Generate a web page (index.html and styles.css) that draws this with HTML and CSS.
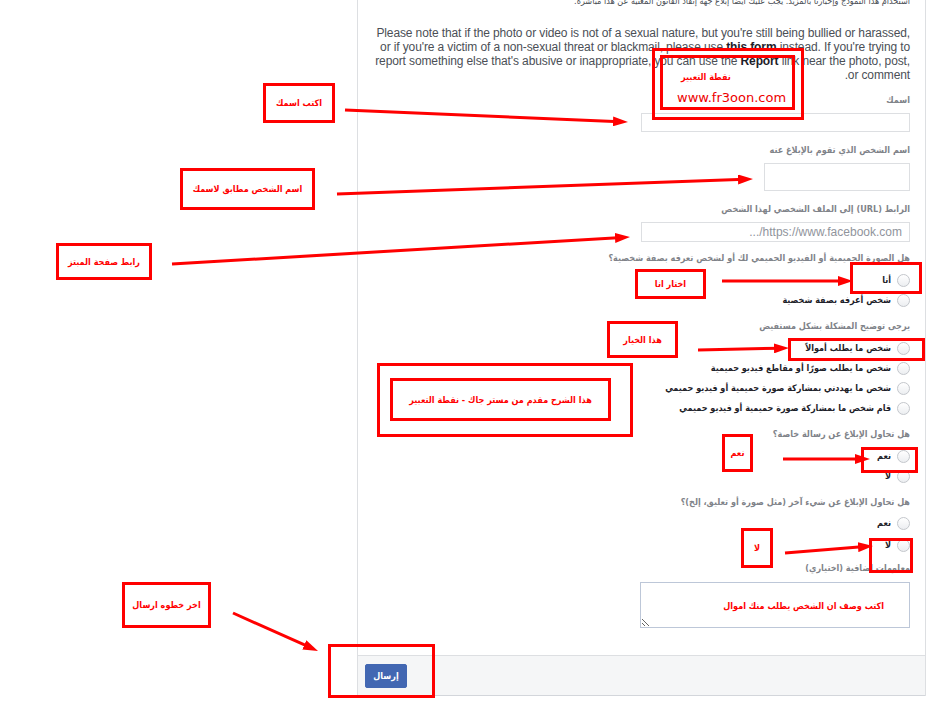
FILE: index.html
```html
<!DOCTYPE html>
<html lang="ar">
<head>
    <meta charset="UTF-8">
    <meta name="viewport" content="width=device-width, initial-scale=1.0">
    <title>الإبلاغ عن صورة حميمية</title>
    <link rel="stylesheet" href="styles.css">
</head>
<body>
    <div class="page">
        <div class="panel">
            <div class="panel-body" dir="rtl">
                <p class="intro-ar">استخدام هذا النموذج وإخبارنا بالمزيد. يجب عليك أيضًا إبلاغ جهة إنفاذ القانون المعنية عن هذا مباشرة.</p>
                <p class="notice">Please note that if the photo or video is not of a sexual nature, but you're still being bullied or harassed, or if you're a victim of a non-sexual threat or blackmail, please use <b>this form</b> instead. If you're trying to report something else that's abusive or inappropriate, you can use the <b>Report</b> link near the photo, post, or comment.</p>

                <div class="field">
                    <label class="field-label" for="yourname">اسمك</label>
                    <input class="text-input" type="text" id="yourname">
                </div>
                <div class="field">
                    <label class="field-label" for="reported">اسم الشخص الذي تقوم بالإبلاغ عنه</label>
                    <input class="text-input short" type="text" id="reported">
                </div>
                <div class="field">
                    <label class="field-label" for="profile">الرابط (URL) إلى الملف الشخصي لهذا الشخص</label>
                    <input class="text-input url" type="text" id="profile" placeholder="https://www.facebook.com/...">
                </div>

                <div class="question">
                    <div class="question-label">هل الصورة الحميمية أو الفيديو الحميمي لك أو لشخص تعرفه بصفة شخصية؟</div>
                    <label class="radio-row"><input type="radio" name="whose">أنا</label>
                    <label class="radio-row"><input type="radio" name="whose">شخص أعرفه بصفة شخصية</label>
                </div>
                <div class="question">
                    <div class="question-label">يرجى توضيح المشكلة بشكل مستفيض</div>
                    <label class="radio-row"><input type="radio" name="problem">شخص ما يطلب أموالاً</label>
                    <label class="radio-row"><input type="radio" name="problem">شخص ما يطلب صورًا أو مقاطع فيديو حميمية</label>
                    <label class="radio-row"><input type="radio" name="problem">شخص ما يهددني بمشاركة صورة حميمية أو فيديو حميمي</label>
                    <label class="radio-row"><input type="radio" name="problem">قام شخص ما بمشاركة صورة حميمية أو فيديو حميمي</label>
                </div>
                <div class="question">
                    <div class="question-label">هل تحاول الإبلاغ عن رسالة خاصة؟</div>
                    <label class="radio-row"><input type="radio" name="message">نعم</label>
                    <label class="radio-row"><input type="radio" name="message">لا</label>
                </div>
                <div class="question loose">
                    <div class="question-label">هل تحاول الإبلاغ عن شيء آخر (مثل صورة أو تعليق، إلخ)؟</div>
                    <label class="radio-row"><input type="radio" name="other">نعم</label>
                    <label class="radio-row"><input type="radio" name="other">لا</label>
                </div>

                <div class="field extra">
                    <label class="field-label" for="details">معلومات إضافية (اختياري)</label>
                    <textarea class="details" id="details"></textarea>
                </div>
            </div>
            <div class="panel-footer">
                <button class="send-btn" type="button">إرسال</button>
            </div>
        </div>

        <!-- red notes drawn over the form -->
        <div class="note-box note-site-outer"></div>
        <div class="note-box note-site">
            <span class="note-text">نقطة التعبير</span>
            <span class="site-url">www.fr3oon.com</span>
        </div>
        <div class="note-box note-name"><span class="note-text">اكتب اسمك</span></div>
        <div class="note-box note-same"><span class="note-text">اسم الشخص مطابق لاسمك</span></div>
        <div class="note-box note-link"><span class="note-text">رابط صفحة المبتز</span></div>
        <div class="note-box note-me"><span class="note-text">اختار انا</span></div>
        <div class="note-box mark-me"></div>
        <div class="note-box note-choice"><span class="note-text">هذا الخيار</span></div>
        <div class="note-box mark-money"></div>
        <div class="note-box note-credit-outer"></div>
        <div class="note-box note-credit"><span class="note-text">هذا الشرح مقدم من مستر جاك - نقطة التعبير</span></div>
        <div class="note-box note-yes"><span class="note-text">نعم</span></div>
        <div class="note-box mark-yes"></div>
        <div class="note-box note-no"><span class="note-text">لا</span></div>
        <div class="note-box mark-no"></div>
        <div class="note-box note-send"><span class="note-text">اخر خطوه ارسال</span></div>
        <div class="note-box mark-send"></div>
        <div class="note-text note-describe">اكتب وصف ان الشخص يطلب منك اموال</div>

        <svg class="arrows" width="943" height="716" viewBox="0 0 943 716">
            <defs>
                <marker id="head" markerWidth="15" markerHeight="10" refX="7" refY="5" orient="auto" markerUnits="userSpaceOnUse">
                    <path d="M0,0 L15,5 L0,10 z" fill="#f00"/>
                </marker>
            </defs>
            <g stroke="#f00" stroke-width="3" marker-end="url(#head)">
                <line x1="345" y1="110" x2="620" y2="121.7"/>
                <line x1="337" y1="194" x2="745" y2="179.3"/>
                <line x1="172" y1="264" x2="622" y2="237.5"/>
                <line x1="722" y1="281" x2="845" y2="281"/>
                <line x1="698" y1="350" x2="781" y2="348.2"/>
                <line x1="783" y1="459" x2="862" y2="459"/>
                <line x1="785" y1="553" x2="865" y2="546.6"/>
                <line x1="233" y1="613" x2="310.7" y2="647.7"/>
            </g>
        </svg>
    </div>
</body>
</html>
```

FILE: styles.css
```css
body {
    margin: 0;
    background-color: #fff;
    font-family: "Liberation Sans", "DejaVu Sans", sans-serif;
}
.page {
    position: relative;
    width: 943px;
    height: 716px;
    overflow: hidden;
}
.panel {
    margin-left: 357px;
    width: 567px;
    border-left: 1px solid #dddfe2;
    border-right: 1px solid #dddfe2;
}
.panel-body {
    padding: 0 15px 27px 19px;
    direction: rtl;
}
.intro-ar {
    margin: -6px 0 0;
    font-family: "DejaVu Sans", sans-serif;
    font-stretch: condensed;
    font-size: 9px;
    line-height: 14px;
    color: #4b4f56;
}
.notice {
    margin: 18px 0 0 -3px;
    font-size: 12px;
    line-height: 14px;
    letter-spacing: -0.12px;
    color: #4b4f56;
}
.notice b {
    color: #1d2129;
}
.field {
    margin-top: 11px;
}
.field-label,
.question-label {
    display: block;
    margin-bottom: 6px;
    font-family: "DejaVu Sans", sans-serif;
    font-stretch: condensed;
    font-size: 9px;
    font-weight: bold;
    line-height: 14px;
    color: #7f8389;
}
.text-input {
    display: block;
    width: 269px;
    height: 19px;
    padding: 0 7px;
    border: 1px solid #dddfe2;
    box-sizing: border-box;
    font-family: "Liberation Sans", sans-serif;
    font-size: 12px;
    background: #fff;
}
.text-input.short {
    width: 146px;
    height: 28px;
}
.text-input.url {
    height: 20px;
}
.text-input::placeholder {
    color: #90949c;
}
.question {
    margin-top: 9px;
}
.question-label {
    margin-bottom: 5px;
}
.question.loose .question-label {
    margin-bottom: 3px;
}
.radio-row {
    display: flex;
    align-items: center;
    gap: 6px;
    height: 20px;
    font-family: "DejaVu Sans", sans-serif;
    font-stretch: condensed;
    font-size: 9px;
    font-weight: bold;
    color: #1d2129;
}
.question.loose .radio-row {
    height: 22px;
}
.radio-row input {
    appearance: none;
    -webkit-appearance: none;
    width: 13px;
    height: 13px;
    margin: 0;
    border: 1px solid #c4c7cc;
    border-radius: 50%;
    background: linear-gradient(#ffffff, #eceef1);
    box-sizing: border-box;
}
.field.extra {
    margin-top: 5px;
}
.field.extra .field-label {
    margin-bottom: 7px;
}
.details {
    display: block;
    width: 270px;
    height: 46px;
    margin: 0;
    border: 1px solid #bdc7d8;
    box-sizing: border-box;
    font-size: 12px;
}
.panel-footer {
    padding: 8px 7px 7px;
    background-color: #f5f6f7;
    border-top: 1px solid #dddfe2;
    border-bottom: 1px solid #d3d6db;
}
.send-btn {
    display: block;
    width: 42px;
    height: 24px;
    padding: 0;
    border: 1px solid #4267b2;
    border-radius: 2px;
    background-color: #4267b2;
    color: #fff;
    font-family: "DejaVu Sans", sans-serif;
    font-stretch: condensed;
    font-size: 9px;
    font-weight: bold;
}

/* annotations */
.note-box {
    position: absolute;
    border: 3px solid #f00;
    box-sizing: border-box;
    display: flex;
    flex-direction: column;
    align-items: center;
    justify-content: center;
}
.note-text {
    font-family: "DejaVu Sans", sans-serif;
    font-stretch: condensed;
    font-size: 9px;
    font-weight: bold;
    line-height: 14px;
    color: #f00;
    direction: rtl;
    white-space: nowrap;
}
.site-url {
    margin-top: 6px;
    font-family: "DejaVu Sans", sans-serif;
    font-size: 13px;
    line-height: 15px;
    color: #e00;
}
.note-site-outer { left: 652px; top: 48px; width: 152px; height: 72px; }
.note-site {
    left: 660px;
    top: 55px;
    width: 135px;
    height: 55px;
    align-items: flex-start;
    justify-content: flex-start;
    padding: 12px 0 0 14px;
}
.note-site .note-text { margin-left: 4px; }
.note-name { left: 263px; top: 83px; width: 72px; height: 40px; }
.note-same { left: 180px; top: 168px; width: 135px; height: 42px; }
.note-link { left: 56px; top: 243px; width: 96px; height: 37px; }
.note-me { left: 635px; top: 269px; width: 71px; height: 30px; }
.mark-me { left: 850px; top: 262px; width: 72px; height: 32px; }
.note-choice { left: 607px; top: 321px; width: 71px; height: 37px; }
.mark-money { left: 788px; top: 338px; width: 137px; height: 23px; }
.note-credit-outer { left: 377px; top: 363px; width: 256px; height: 74px; }
.note-credit { left: 390px; top: 378px; width: 221px; height: 43px; }
.note-yes { left: 722px; top: 434px; width: 31px; height: 38px; }
.mark-yes { left: 861px; top: 447px; width: 57px; height: 26px; }
.note-no { left: 741px; top: 528px; width: 32px; height: 40px; }
.mark-no { left: 869px; top: 538px; width: 44px; height: 35px; }
.note-send { left: 122px; top: 582px; width: 89px; height: 46px; }
.mark-send { left: 328px; top: 644px; width: 107px; height: 54px; }
.note-describe {
    position: absolute;
    right: 59px;
    top: 599px;
}
.arrows {
    position: absolute;
    left: 0;
    top: 0;
    pointer-events: none;
}
```
